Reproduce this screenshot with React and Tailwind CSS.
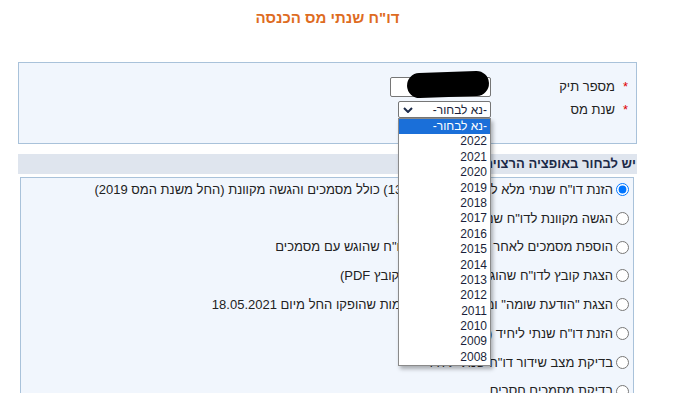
import { useState } from "react";

const years = [2022, 2021, 2020, 2019, 2018, 2017, 2016, 2015, 2014, 2013, 2012, 2011, 2010, 2009, 2008];

const actions = [
  'הזנת דו"ח שנתי מלא ליחידים (טופס 1301) כולל מסמכים והגשה מקוונת (החל משנת המס 2019)',
  'הגשה מקוונת לדו"ח שנתי שמולא ידנית ו',
  'הוספת מסמכים לאחר הגשה מקוונת לדו"ח שהוגש עם מסמכים',
  'הצגת קובץ לדו"ח שהוגש בשנה קודמת (קובץ PDF)',
  'הצגת "הודעת שומה" ומסמכים לכל השומות שהופקו החל מיום 18.05.2021',
  'הזנת דו"ח שנתי ליחיד (טופס 1301)',
  'בדיקת מצב שידור דו"ח שנתי ליחיד',
  "בדיקת מסמכים חסרים",
];

function Chevron() {
  return (
    <svg width="10" height="6" viewBox="0 0 10 6" className="shrink-0">
      <path d="M1 1 L5 5 L9 1" fill="none" stroke="#1d2b4a" strokeWidth="2" />
    </svg>
  );
}

export default function App() {
  const [picked, setPicked] = useState(0);

  return (
    <div
      dir="rtl"
      className="w-[674px] h-[393px] overflow-hidden bg-white font-['Liberation_Sans',Arial,sans-serif] text-[13px] text-[#222]"
    >
      <div className="mr-[37px] w-[619px]">
        {/* Title */}
        <div className="pt-[9px] h-[62px] text-center text-[15px] leading-[17px] font-bold text-[#de6c1f]">
          דו"ח שנתי מס הכנסה
        </div>

        {/* Top panel */}
        <div className="h-[82px] border border-[#a9c2da] bg-[#f1f6fd] pt-[14px]">
          <div className="flex items-center h-[20px]">
            <span className="w-[21px] text-center text-[#e00000]">*</span>
            <span className="w-[124px]">מספר תיק</span>
            <div className="relative w-[101px] h-[20px] border border-[#767676] rounded-[2px] bg-white">
              <div className="absolute left-[16px] top-[-6px] w-[82px] h-[25px] rounded-[13px] bg-black -rotate-2" />
            </div>
          </div>
          <div className="flex items-center h-[17px] mt-[4px]">
            <span className="w-[21px] text-center text-[#e00000]">*</span>
            <span className="w-[124px]">שנת מס</span>
            <div className="relative w-[93px] h-[17px]">
              <div className="flex items-center justify-between h-full border border-[#767676] rounded-[2px] bg-white pr-[3px] pl-[4px] text-[12px] text-[#1a1f3a]">
                <span>-נא לבחור-</span>
                <Chevron />
              </div>
              <div className="absolute z-10 top-[17px] right-0 w-[93px] border border-[#8a8a8a] bg-white shadow-[2px_3px_4px_rgba(0,0,0,0.3)] text-[12px]">
                <div className="h-[15.4px] leading-[15.4px] pr-[3px] bg-[#1a6fd9] text-white">-נא לבחור-</div>
                {years.map((y) => (
                  <div key={y} className="h-[15.4px] leading-[15.4px] pr-[3px] text-[#1a1f3a]">
                    {y}
                  </div>
                ))}
              </div>
            </div>
          </div>
        </div>

        {/* Section header */}
        <div className="mt-[10px] h-[20px] bg-[#dfe5ee] pr-[1px] leading-[20px] font-bold text-[#1c2a48]">
          יש לבחור באופציה הרצויה:
        </div>

        {/* Options */}
        <div className="mt-[3px] mr-[3px] ml-[2px] h-[240px] border border-[#a9c2da] bg-[#f1f6fd] pt-[4px] pr-[4px] flex flex-col gap-[13.8px]">
          {actions.map((a, i) => (
            <label key={i} className="flex items-center gap-[3px] h-[15px] whitespace-nowrap">
              <input
                type="radio"
                name="action"
                checked={picked === i}
                onChange={() => setPicked(i)}
                className="m-0 w-[13px] h-[13px] accent-[#0075ff] shrink-0"
              />
              <span>{a}</span>
            </label>
          ))}
        </div>
      </div>
    </div>
  );
}
